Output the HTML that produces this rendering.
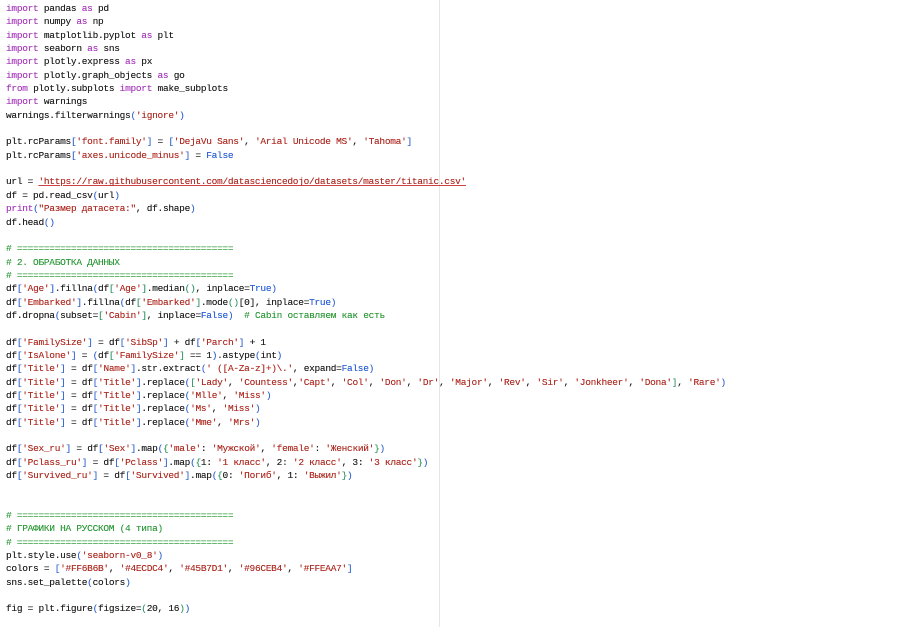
<!DOCTYPE html>
<html><head><meta charset="utf-8"><style>
html,body{margin:0;padding:0;background:#fff;width:900px;height:627px;overflow:hidden}
.vl{position:absolute;left:439px;top:0;width:1px;height:627px;background:#e6e6e6}
pre{position:absolute;left:6px;top:2px;margin:0;font-family:"Liberation Mono","DejaVu Sans Mono",monospace;font-size:9.5px;letter-spacing:-0.29px;line-height:13.35px;color:#222;text-shadow:0 0 0.3px currentColor}
.k{color:#a83cbc}.s{color:#b02e26}.c{color:#2f9a3a}.b{color:#2a5fd8}.p{color:#3a6ad0}.g{color:#3a9a6a}
.u{text-decoration:underline;text-decoration-color:#d04040}
</style></head><body><div class="vl"></div><pre><span class="k">import</span> pandas <span class="k">as</span> pd
<span class="k">import</span> numpy <span class="k">as</span> np
<span class="k">import</span> matplotlib.pyplot <span class="k">as</span> plt
<span class="k">import</span> seaborn <span class="k">as</span> sns
<span class="k">import</span> plotly.express <span class="k">as</span> px
<span class="k">import</span> plotly.graph_objects <span class="k">as</span> go
<span class="k">from</span> plotly.subplots <span class="k">import</span> make_subplots
<span class="k">import</span> warnings
warnings.filterwarnings<span class="p">(</span><span class="s">'ignore'</span><span class="p">)</span>

plt.rcParams<span class="p">[</span><span class="s">'font.family'</span><span class="p">]</span> = <span class="p">[</span><span class="s">'DejaVu Sans'</span>, <span class="s">'Arial Unicode MS'</span>, <span class="s">'Tahoma'</span><span class="p">]</span>
plt.rcParams<span class="p">[</span><span class="s">'axes.unicode_minus'</span><span class="p">]</span> = <span class="b">False</span>

url = <span class="s u">'https://raw.githubusercontent.com/datasciencedojo/datasets/master/titanic.csv'</span>
df = pd.read_csv<span class="p">(</span>url<span class="p">)</span>
<span class="k">print</span><span class="p">(</span><span class="s">"Размер датасета:"</span>, df.shape<span class="p">)</span>
df.head<span class="p">()</span>

<span class="c"># ========================================</span>
<span class="c"># 2. ОБРАБОТКА ДАННЫХ</span>
<span class="c"># ========================================</span>
df<span class="p">[</span><span class="s">'Age'</span><span class="p">]</span>.fillna<span class="p">(</span>df<span class="g">[</span><span class="s">'Age'</span><span class="g">]</span>.median<span class="g">()</span>, inplace=<span class="b">True</span><span class="p">)</span>
df<span class="p">[</span><span class="s">'Embarked'</span><span class="p">]</span>.fillna<span class="p">(</span>df<span class="g">[</span><span class="s">'Embarked'</span><span class="g">]</span>.mode<span class="g">()</span>[0], inplace=<span class="b">True</span><span class="p">)</span>
df.dropna<span class="p">(</span>subset=<span class="g">[</span><span class="s">'Cabin'</span><span class="g">]</span>, inplace=<span class="b">False</span><span class="p">)</span>  <span class="c"># Cabin оставляем как есть</span>

df<span class="p">[</span><span class="s">'FamilySize'</span><span class="p">]</span> = df<span class="p">[</span><span class="s">'SibSp'</span><span class="p">]</span> + df<span class="p">[</span><span class="s">'Parch'</span><span class="p">]</span> + 1
df<span class="p">[</span><span class="s">'IsAlone'</span><span class="p">]</span> = <span class="p">(</span>df<span class="g">[</span><span class="s">'FamilySize'</span><span class="g">]</span> == 1<span class="p">)</span>.astype<span class="p">(</span>int<span class="p">)</span>
df<span class="p">[</span><span class="s">'Title'</span><span class="p">]</span> = df<span class="p">[</span><span class="s">'Name'</span><span class="p">]</span>.str.extract<span class="p">(</span><span class="s">' ([A-Za-z]+)\.'</span>, expand=<span class="b">False</span><span class="p">)</span>
df<span class="p">[</span><span class="s">'Title'</span><span class="p">]</span> = df<span class="p">[</span><span class="s">'Title'</span><span class="p">]</span>.replace<span class="p">(</span><span class="g">[</span><span class="s">'Lady'</span>, <span class="s">'Countess'</span>,<span class="s">'Capt'</span>, <span class="s">'Col'</span>, <span class="s">'Don'</span>, <span class="s">'Dr'</span>, <span class="s">'Major'</span>, <span class="s">'Rev'</span>, <span class="s">'Sir'</span>, <span class="s">'Jonkheer'</span>, <span class="s">'Dona'</span><span class="g">]</span>, <span class="s">'Rare'</span><span class="p">)</span>
df<span class="p">[</span><span class="s">'Title'</span><span class="p">]</span> = df<span class="p">[</span><span class="s">'Title'</span><span class="p">]</span>.replace<span class="p">(</span><span class="s">'Mlle'</span>, <span class="s">'Miss'</span><span class="p">)</span>
df<span class="p">[</span><span class="s">'Title'</span><span class="p">]</span> = df<span class="p">[</span><span class="s">'Title'</span><span class="p">]</span>.replace<span class="p">(</span><span class="s">'Ms'</span>, <span class="s">'Miss'</span><span class="p">)</span>
df<span class="p">[</span><span class="s">'Title'</span><span class="p">]</span> = df<span class="p">[</span><span class="s">'Title'</span><span class="p">]</span>.replace<span class="p">(</span><span class="s">'Mme'</span>, <span class="s">'Mrs'</span><span class="p">)</span>

df<span class="p">[</span><span class="s">'Sex_ru'</span><span class="p">]</span> = df<span class="p">[</span><span class="s">'Sex'</span><span class="p">]</span>.map<span class="p">(</span><span class="g">{</span><span class="s">'male'</span>: <span class="s">'Мужской'</span>, <span class="s">'female'</span>: <span class="s">'Женский'</span><span class="g">}</span><span class="p">)</span>
df<span class="p">[</span><span class="s">'Pclass_ru'</span><span class="p">]</span> = df<span class="p">[</span><span class="s">'Pclass'</span><span class="p">]</span>.map<span class="p">(</span><span class="g">{</span>1: <span class="s">'1 класс'</span>, 2: <span class="s">'2 класс'</span>, 3: <span class="s">'3 класс'</span><span class="g">}</span><span class="p">)</span>
df<span class="p">[</span><span class="s">'Survived_ru'</span><span class="p">]</span> = df<span class="p">[</span><span class="s">'Survived'</span><span class="p">]</span>.map<span class="p">(</span><span class="g">{</span>0: <span class="s">'Погиб'</span>, 1: <span class="s">'Выжил'</span><span class="g">}</span><span class="p">)</span>


<span class="c"># ========================================</span>
<span class="c"># ГРАФИКИ НА РУССКОМ (4 типа)</span>
<span class="c"># ========================================</span>
plt.style.use<span class="p">(</span><span class="s">'seaborn-v0_8'</span><span class="p">)</span>
colors = <span class="p">[</span><span class="s">'#FF6B6B'</span>, <span class="s">'#4ECDC4'</span>, <span class="s">'#45B7D1'</span>, <span class="s">'#96CEB4'</span>, <span class="s">'#FFEAA7'</span><span class="p">]</span>
sns.set_palette<span class="p">(</span>colors<span class="p">)</span>

fig = plt.figure<span class="p">(</span>figsize=<span class="g">(</span>20, 16<span class="g">)</span><span class="p">)</span></pre></body></html>
